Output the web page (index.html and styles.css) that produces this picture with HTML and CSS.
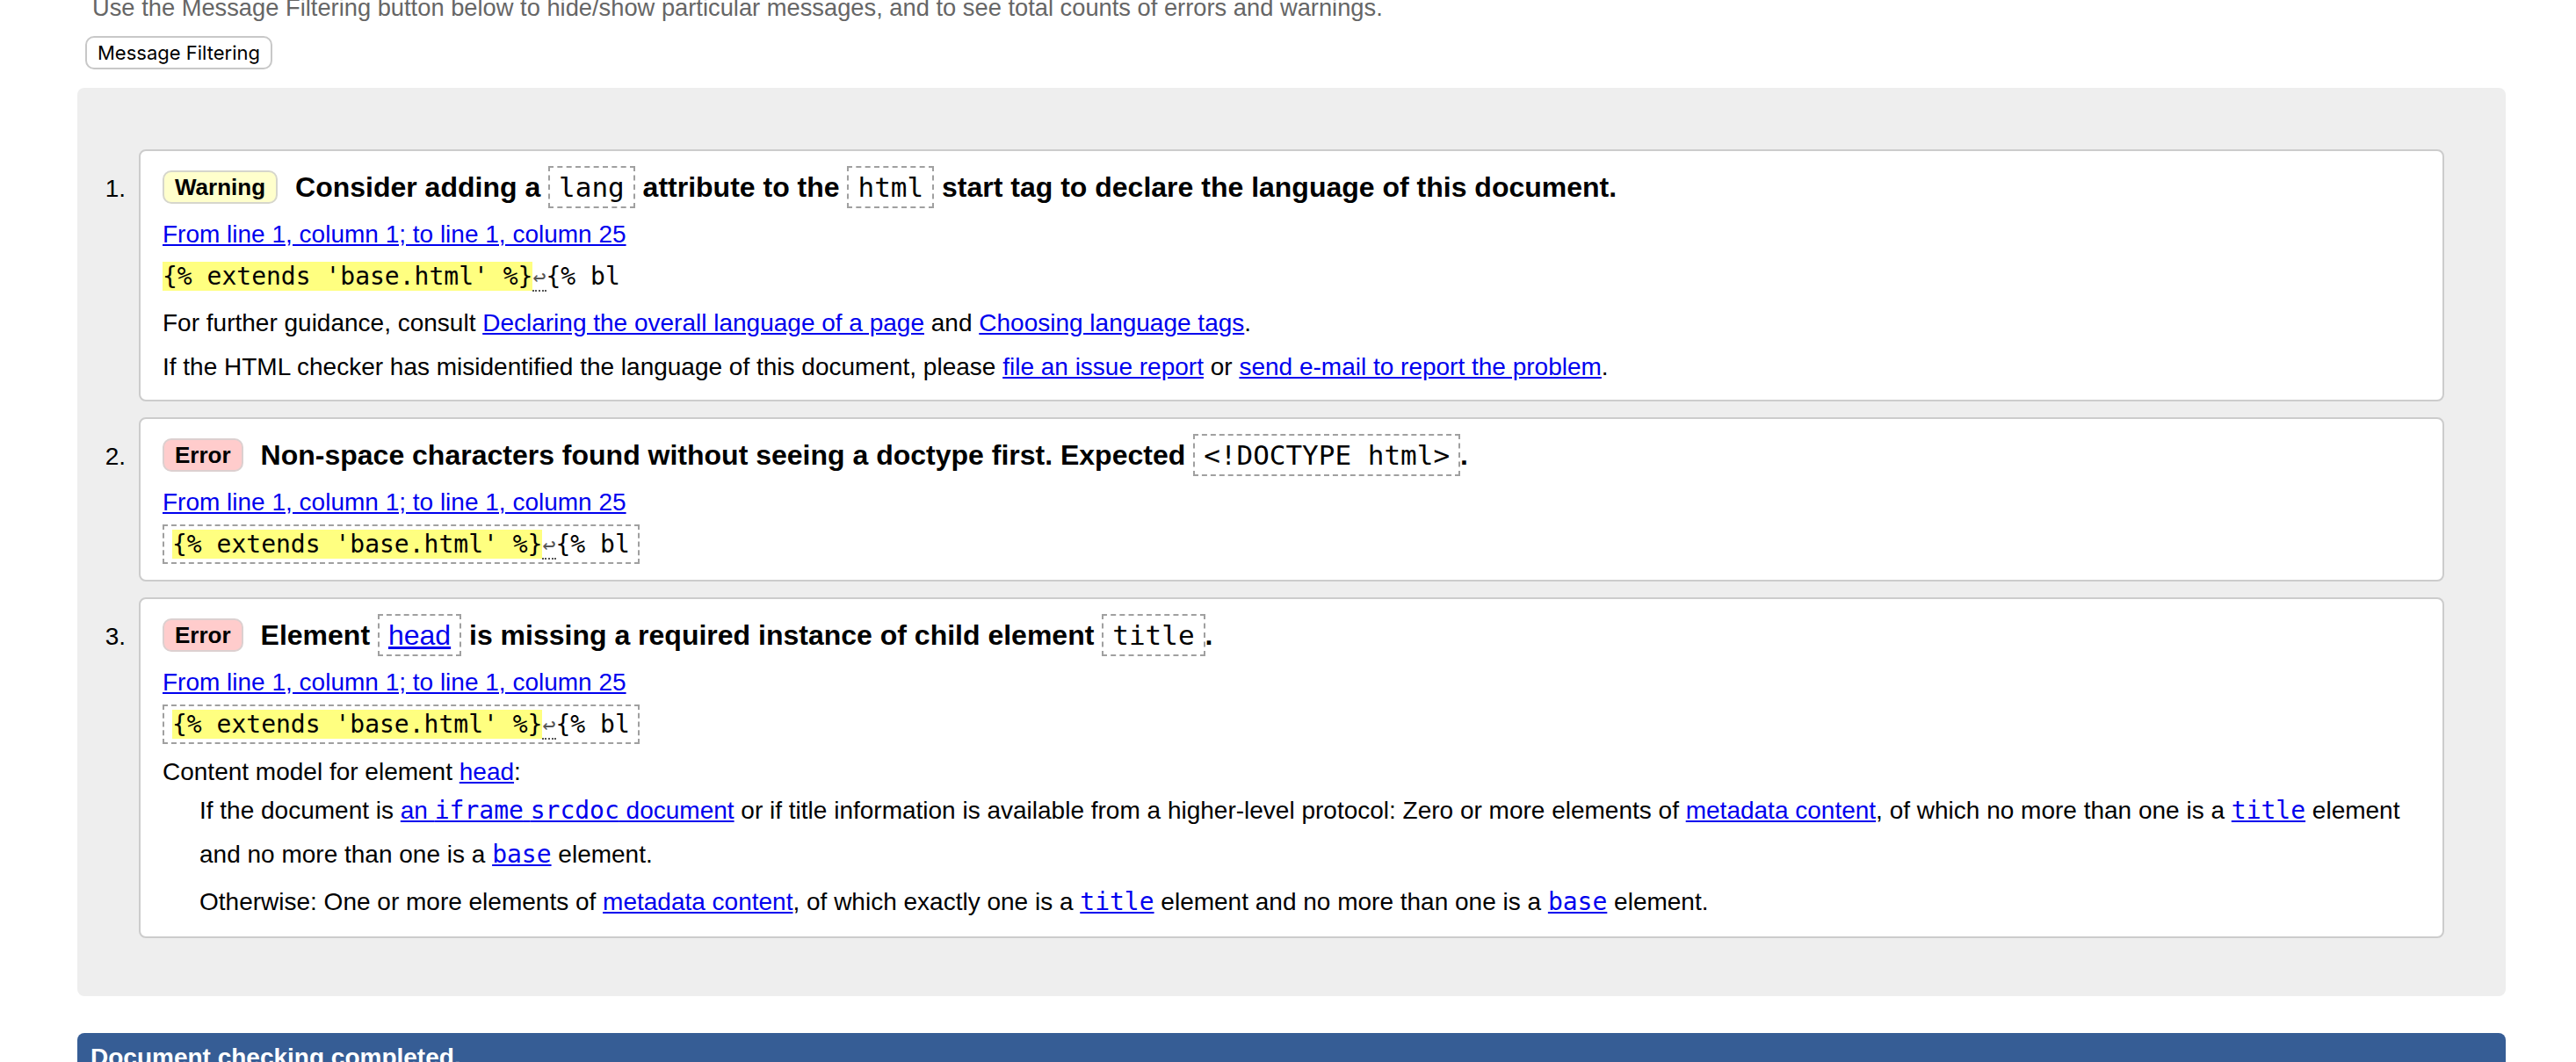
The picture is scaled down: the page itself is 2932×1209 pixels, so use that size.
FILE: index.html
```html
<!DOCTYPE html>
<html lang="en">
<head>
<meta charset="utf-8">
<title>Nu Html Checker</title>
<link rel="stylesheet" href="styles.css">
</head>
<body>
<div class="page">
  <p class="intro">Use the Message Filtering button below to hide/show particular messages, and to see total counts of errors and warnings.</p>
  <button class="filter-btn" type="button">Message Filtering</button>
  <div class="results">
    <ol class="messages">
      <li class="msg">
        <span class="num">1.</span>
        <div class="card">
          <p class="title"><span class="badge warning">Warning</span>Consider adding a <code class="hc">lang</code> attribute to the <code class="hc">html</code> start tag to declare the language of this document.</p>
          <p class="loc"><a href="#">From line 1, column 1; to line 1, column 25</a></p>
          <p class="extract"><code class="src"><mark>{% extends 'base.html' %}</mark><span class="lf">↩</span>{% bl</code></p>
          <p class="text">For further guidance, consult <a href="#">Declaring the overall language of a page</a> and <a href="#">Choosing language tags</a>.</p>
          <p class="text">If the HTML checker has misidentified the language of this document, please <a href="#">file an issue report</a> or <a href="#">send e-mail to report the problem</a>.</p>
        </div>
      </li>
      <li class="msg">
        <span class="num">2.</span>
        <div class="card">
          <p class="title"><span class="badge error">Error</span>Non-space characters found without seeing a doctype first. Expected <code class="hc">&lt;!DOCTYPE html&gt;</code>.</p>
          <p class="loc"><a href="#">From line 1, column 1; to line 1, column 25</a></p>
          <p class="extract"><code class="src boxed"><mark>{% extends 'base.html' %}</mark><span class="lf">↩</span>{% bl</code></p>
        </div>
      </li>
      <li class="msg">
        <span class="num">3.</span>
        <div class="card">
          <p class="title"><span class="badge error">Error</span>Element <code class="hc sans"><a href="#">head</a></code> is missing a required instance of child element <code class="hc">title</code>.</p>
          <p class="loc"><a href="#">From line 1, column 1; to line 1, column 25</a></p>
          <p class="extract"><code class="src boxed"><mark>{% extends 'base.html' %}</mark><span class="lf">↩</span>{% bl</code></p>
          <p class="cm">Content model for element <a href="#">head</a>:</p>
          <p class="dd">If the document is <a href="#">an <code>iframe</code> <code>srcdoc</code> document</a> or if title information is available from a higher-level protocol: Zero or more elements of <a href="#">metadata content</a>, of which no more than one is a <a href="#"><code>title</code></a> element and no more than one is a <a href="#"><code>base</code></a> element.</p>
          <p class="dd dd2">Otherwise: One or more elements of <a href="#">metadata content</a>, of which exactly one is a <a href="#"><code>title</code></a> element and no more than one is a <a href="#"><code>base</code></a> element.</p>
        </div>
      </li>
    </ol>
  </div>
  <div class="banner">Document checking completed.</div>
</div>
</body>
</html>
```

FILE: styles.css
```css
* { box-sizing: border-box; }
html, body { margin: 0; padding: 0; background: #fff; }
body {
  font-family: "Liberation Sans", Arial, Helvetica, sans-serif;
  font-size: 28px;
  color: #000;
}
p { margin: 0; }
a { color: #0000ee; }

.page { margin: 0 80px 0 88px; }

.intro {
  margin: -7px 0 0 17px;
  font-size: 27.3px;
  line-height: 32px;
  color: #666;
  white-space: nowrap;
}

.filter-btn {
  display: block;
  margin: 16px 0 0 9px;
  height: 38px;
  padding: 0 12px;
  border: 2px solid #c8c8c8;
  border-radius: 10px;
  background: #fff;
  font-family: Inter, "Liberation Sans", sans-serif;
  font-size: 22px;
  color: #000;
}

.results {
  margin-top: 21px;
  background: #eee;
  border-radius: 8px;
  padding: 70px 70px 66px 0;
}

.messages {
  list-style: none;
  margin: 0;
  padding: 0;
  display: flex;
  flex-direction: column;
  gap: 18px;
}

.msg { display: flex; align-items: baseline; }

.num {
  width: 55px;
  flex: none;
  text-align: right;
  font-size: 28px;
}

.card {
  flex: 1;
  margin-left: 15px;
  background: #fff;
  border: 2px solid #ccc;
  border-radius: 8px;
  padding: 16px 25px 12px;
  display: flex;
  flex-direction: column;
}

.title {
  font-size: 32px;
  font-weight: bold;
  line-height: 50px;
}

.badge {
  display: inline-block;
  vertical-align: 2px;
  font-size: 26px;
  line-height: 34px;
  padding: 0 12px;
  border: 2px solid #d6d6cc;
  border-radius: 10px;
  margin-right: 20px;
}
.badge.warning { background: #ffffcc; }
.badge.error { background: #ffcccc; border-color: #dcd0d0; }

code {
  font-family: "DejaVu Sans Mono", monospace;
  font-size: 28px;
  font-weight: normal;
}

.hc {
  font-size: 31px;
  padding: 4px 10px;
  border: 2px dashed #a0a0a0;
}
.hc.sans {
  padding: 4px 10px;
  font-family: "Liberation Sans", Arial, sans-serif;
  font-size: 32px;
}

.loc { margin-top: 4px; line-height: 50px; }

.extract { line-height: 46px; margin-bottom: 4px; }
.src.boxed {
  padding: 4px 9px;
  border: 2px dashed #a0a0a0;
}
mark { background: #ffff80; color: #000; }
.lf {
  font-family: "DejaVu Sans Mono", "DejaVu Sans", monospace;
  font-size: 25px;
  color: #555;
  border-bottom: 2px dotted #555;
}

.text { line-height: 50px; }
.cm { margin-top: 6px; line-height: 39px; }
.dd { margin-left: 42px; line-height: 50px; }
.dd2 { margin-top: 4px; margin-bottom: 2px; }

.banner {
  margin-top: 42px;
  background: #365d95;
  color: #fff;
  font-weight: bold;
  font-size: 28px;
  line-height: 40px;
  padding: 8px 15px;
  border-radius: 8px 8px 0 0;
}
```
